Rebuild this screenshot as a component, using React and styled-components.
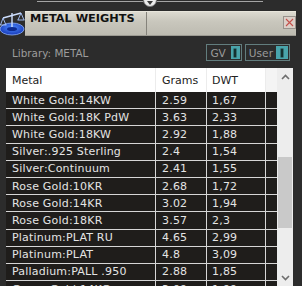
import React from 'react'
import styled, { createGlobalStyle } from 'styled-components'

const GlobalStyle = createGlobalStyle`
  html, body {
    margin: 0;
    padding: 0;
    background: #2c2c2c;
    overflow: hidden;
  }
  * {
    box-sizing: border-box;
  }
`

const rows = [
  ['White Gold:14KW', '2.59', '1,67'],
  ['White Gold:18K PdW', '3.63', '2,33'],
  ['White Gold:18KW', '2.92', '1,88'],
  ['Silver:.925 Sterling', '2.4', '1,54'],
  ['Silver:Continuum', '2.41', '1,55'],
  ['Rose Gold:10KR', '2.68', '1,72'],
  ['Rose Gold:14KR', '3.02', '1,94'],
  ['Rose Gold:18KR', '3.57', '2,3'],
  ['Platinum:PLAT RU', '4.65', '2,99'],
  ['Platinum:PLAT', '4.8', '3,09'],
  ['Palladium:PALL .950', '2.88', '1,85'],
  ['Green Gold:14KG', '3.09', '1,99'],
]

const Panel = styled.div`
  width: 302px;
  height: 286px;
  display: flex;
  flex-direction: column;
  background: #2c2c2c;
  font-family: 'DejaVu Sans', Verdana, sans-serif;
  overflow: hidden;
`

const TopStrip = styled.div`
  height: 8px;
  display: flex;
  align-items: flex-start;
  padding: 0 39px 0 37px;
  overflow: hidden;
`

const SliderLine = styled.div`
  flex: 1;
  height: 1px;
  margin-top: 1px;
  background: #a4a4a4;
`

const Knob = styled.div`
  width: 14px;
  height: 14px;
  margin-top: -7px;
  border-radius: 50%;
  background: #ececec;
  border: 1px solid #7a7a7a;
  display: flex;
  align-items: flex-end;
  justify-content: center;
  padding-bottom: 1px;
  &::after {
    content: '';
    border-left: 3px solid transparent;
    border-right: 3px solid transparent;
    border-top: 4px solid #3a3a3a;
  }
`

const TitleRow = styled.div`
  height: 28px;
  display: flex;
  align-items: flex-end;
`

const IconBox = styled.div`
  width: 25px;
  height: 28px;
  flex: none;
`

const TitleBar = styled.div`
  flex: 1;
  height: 25px;
  margin-right: 6px;
  display: flex;
  background: linear-gradient(#dcdad0, #c9c7bd 40%, #bdbbb1);
  border-top: 1px solid #e8e6dc;
  border-bottom: 1px solid #9c9a92;
`

const TitleTab = styled.div`
  width: 122px;
  border-right: 1px solid #85837b;
  padding-left: 5px;
  font-weight: bold;
  font-size: 11.3px;
  line-height: 14px;
  color: #111;
`

const TitleFill = styled.div`
  flex: 1;
  display: flex;
  justify-content: flex-end;
  align-items: flex-start;
  padding: 4px 0 0;
`

const CloseButton = styled.div`
  width: 13px;
  height: 13px;
  background: #dccfc8;
  border: 1px solid #98938d;
  display: flex;
  align-items: center;
  justify-content: center;
`

const InfoRow = styled.div`
  height: 32px;
  display: flex;
  align-items: center;
  padding: 1px 12px 0;
  gap: 3px;
`

const LibraryLabel = styled.div`
  flex: 1;
  font-size: 10.4px;
  color: #9c9c9c;
`

const Toggle = styled.div`
  height: 17px;
  display: flex;
  align-items: center;
  border: 1px solid #627d7e;
  padding: 0 1px 0 3px;
  gap: ${(p) => p.gap}px;
  font-size: 10.6px;
  color: #9a9a9a;
`

const ToggleKnob = styled.div`
  width: ${(p) => p.w}px;
  height: 13px;
  background: #49a4ab;
  display: flex;
  align-items: center;
  justify-content: center;
  &::after {
    content: '';
    width: 2px;
    height: 8px;
    background: #15302f;
    box-shadow: 0 0 0 0.5px #1e4040;
  }
`

const TableArea = styled.div`
  flex: 1;
  display: flex;
  padding-left: 6px;
  overflow: hidden;
`

const Table = styled.div`
  width: 271px;
  flex: none;
`

const Row = styled.div`
  display: grid;
  grid-template-columns: 150px 51px 59px 11px;
  height: ${(p) => (p.header ? '24px' : '17.2px')};
  background: ${(p) => (p.header ? '#ffffff' : '#1f1d1b')};
  border-bottom: ${(p) => (p.header ? 'none' : '1px solid #d6d6d6')};
  color: ${(p) => (p.header ? '#222' : '#e4e4e4')};
  font-size: 11px;
  letter-spacing: ${(p) => (p.header ? '0' : '0.2px')};
`

const Cell = styled.div`
  display: flex;
  align-items: center;
  padding-left: ${(p) => p.pad}px;
  white-space: nowrap;
  overflow: hidden;
  border-right: 1px solid ${(p) => (p.header ? '#ececec' : '#d6d6d6')};
  background: ${(p) => (p.filler && p.header ? '#f4f4f4' : 'transparent')};
  &:last-child {
    border-right: none;
  }
`

const ScrollBar = styled.div`
  width: 16px;
  flex: none;
  display: flex;
  flex-direction: column;
  background: #ededed;
`

const ScrollButton = styled.div`
  height: 17px;
  display: flex;
  align-items: center;
  justify-content: center;
`

const Track = styled.div`
  flex: 1;
  padding: 0 1px;
`

const Thumb = styled.div`
  margin-top: ${(p) => p.offset}px;
  height: ${(p) => p.size}px;
  background: #c9c9c9;
`

function ScaleIcon() {
  return (
    <svg width='25' height='28' viewBox='0 0 25 28'>
      <defs>
        <radialGradient id='disk' cx='50%' cy='40%' r='60%'>
          <stop offset='0' stopColor='#4f8cff' />
          <stop offset='1' stopColor='#1538b8' />
        </radialGradient>
      </defs>
      <ellipse cx='12' cy='21' rx='12' ry='6' fill='url(#disk)' stroke='#8fb4ff' strokeWidth='0.8' />
      <line x1='12' y1='5' x2='12' y2='21' stroke='#cfe0ff' strokeWidth='1.4' />
      <line x1='3' y1='10' x2='21' y2='5' stroke='#cfe0ff' strokeWidth='1.3' />
      <path d='M3 10 L0.5 17 M3 10 L6 17 M0 17 H6.5' stroke='#a9c6ff' strokeWidth='0.9' fill='none' />
      <path d='M21 5 L18 12 M21 5 L24 12 M17.5 12 H24.5' stroke='#a9c6ff' strokeWidth='0.9' fill='none' />
      <ellipse cx='12' cy='21' rx='5' ry='2' fill='#0c2a90' />
    </svg>
  )
}

function Chevron({ up }) {
  return (
    <svg width='9' height='6' viewBox='0 0 9 6'>
      <polyline
        points={up ? '1,5 4.5,1.5 8,5' : '1,1 4.5,4.5 8,1'}
        fill='none'
        stroke='#6e6e6e'
        strokeWidth='1.6'
      />
    </svg>
  )
}

export default function App() {
  return (
    <>
      <GlobalStyle />
      <Panel>
        <TopStrip>
          <SliderLine />
          <Knob />
          <SliderLine />
        </TopStrip>
        <TitleRow>
          <IconBox>
            <ScaleIcon />
          </IconBox>
          <TitleBar>
            <TitleTab>METAL WEIGHTS</TitleTab>
            <TitleFill>
              <CloseButton>
                <svg width='9' height='9' viewBox='0 0 9 9'>
                  <path d='M1 1 L8 8 M8 1 L1 8' stroke='#c4504a' strokeWidth='1.1' />
                </svg>
              </CloseButton>
            </TitleFill>
          </TitleBar>
        </TitleRow>
        <InfoRow>
          <LibraryLabel>Library: METAL</LibraryLabel>
          <Toggle gap={5}>
            GV
            <ToggleKnob w={9} />
          </Toggle>
          <Toggle gap={3}>
            User
            <ToggleKnob w={12} />
          </Toggle>
        </InfoRow>
        <TableArea>
          <Table>
            <Row header>
              <Cell header pad={6}>Metal</Cell>
              <Cell header pad={6}>Grams</Cell>
              <Cell header pad={5}>DWT</Cell>
              <Cell header filler />
            </Row>
            {rows.map(([metal, grams, dwt]) => (
              <Row key={metal}>
                <Cell pad={6}>{metal}</Cell>
                <Cell pad={6}>{grams}</Cell>
                <Cell pad={5}>{dwt}</Cell>
                <Cell filler />
              </Row>
            ))}
          </Table>
          <ScrollBar>
            <ScrollButton>
              <Chevron up />
            </ScrollButton>
            <Track>
              <Thumb offset={72} size={71} />
            </Track>
            <ScrollButton>
              <Chevron />
            </ScrollButton>
          </ScrollBar>
        </TableArea>
      </Panel>
    </>
  )
}
